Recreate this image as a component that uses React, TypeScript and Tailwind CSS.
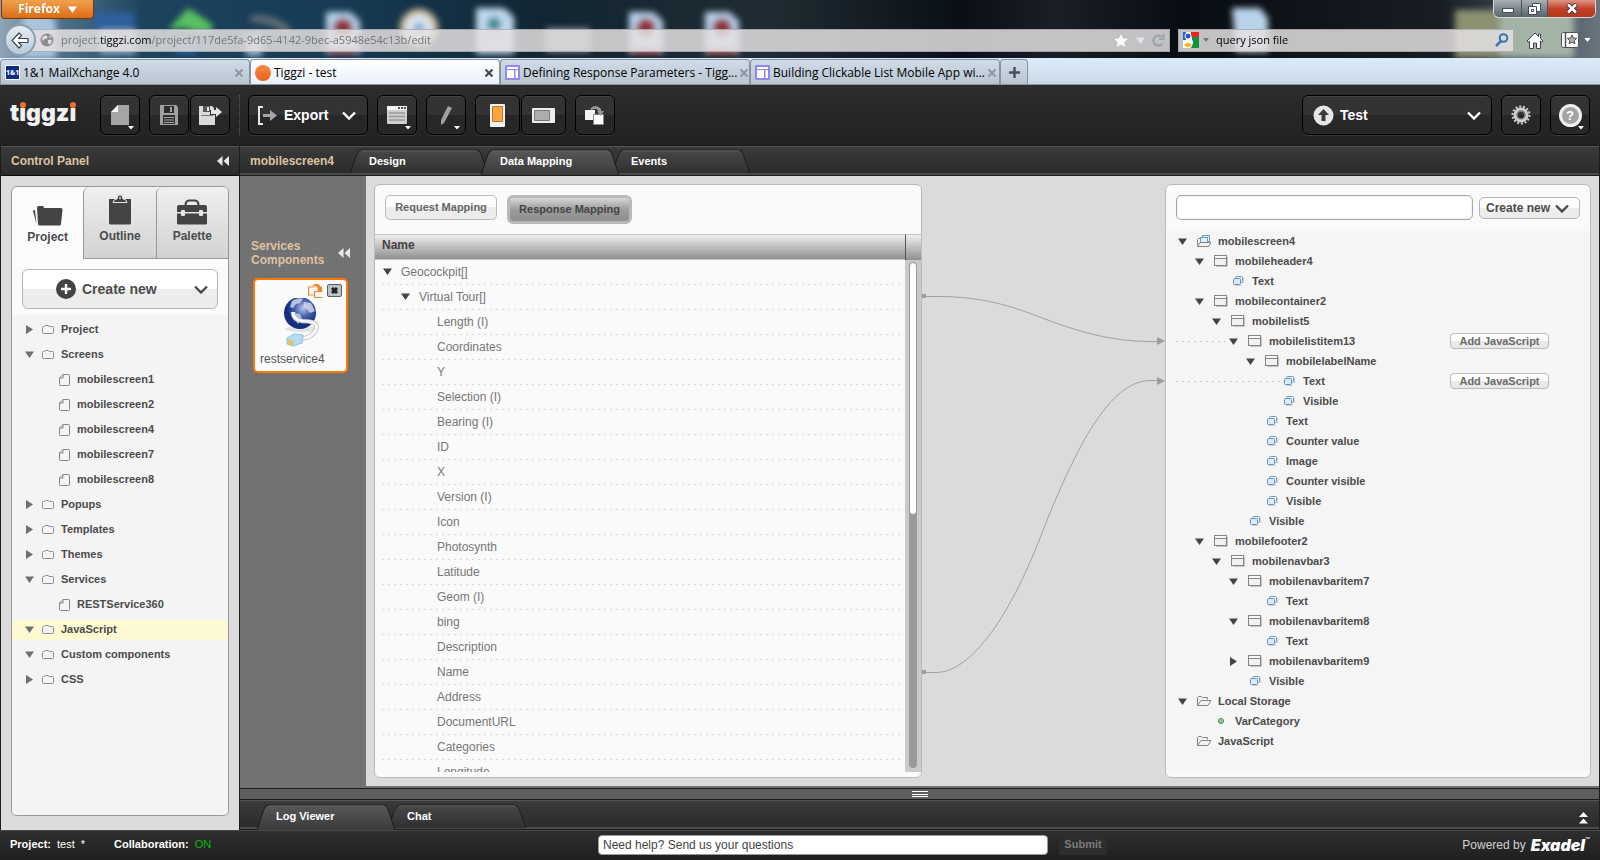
import React from 'react';
import clsx from 'clsx';

type IconKind = 'screen' | 'box' | 'prop' | 'folder' | 'var';

interface ProjectNode {
  label: string;
  state?: 'open' | 'closed';
  active?: boolean;
}

interface TargetNode {
  label: string;
  level: number;
  icon: IconKind;
  state?: 'open' | 'closed';
  mapped?: boolean;
}

const projectTree: ProjectNode[] = [
  { label: 'Project', state: 'closed' },
  { label: 'Screens', state: 'open' },
  { label: 'mobilescreen1' },
  { label: 'mobilescreen2' },
  { label: 'mobilescreen4' },
  { label: 'mobilescreen7' },
  { label: 'mobilescreen8' },
  { label: 'Popups', state: 'closed' },
  { label: 'Templates', state: 'closed' },
  { label: 'Themes', state: 'closed' },
  { label: 'Services', state: 'open' },
  { label: 'RESTService360' },
  { label: 'JavaScript', state: 'open', active: true },
  { label: 'Custom components', state: 'open' },
  { label: 'CSS', state: 'closed' },
];

const responseFields = [
  'Length (I)', 'Coordinates', 'Y', 'Selection (I)', 'Bearing (I)', 'ID', 'X', 'Version (I)', 'Icon',
  'Photosynth', 'Latitude', 'Geom (I)', 'bing', 'Description', 'Name', 'Address', 'DocumentURL',
  'Categories', 'Longitude',
];

const targetTree: TargetNode[] = [
  { label: 'mobilescreen4', level: 0, icon: 'screen', state: 'open' },
  { label: 'mobileheader4', level: 1, icon: 'box', state: 'open' },
  { label: 'Text', level: 2, icon: 'prop' },
  { label: 'mobilecontainer2', level: 1, icon: 'box', state: 'open' },
  { label: 'mobilelist5', level: 2, icon: 'box', state: 'open' },
  { label: 'mobilelistitem13', level: 3, icon: 'box', state: 'open', mapped: true },
  { label: 'mobilelabelName', level: 4, icon: 'box', state: 'open' },
  { label: 'Text', level: 5, icon: 'prop', mapped: true },
  { label: 'Visible', level: 5, icon: 'prop' },
  { label: 'Text', level: 4, icon: 'prop' },
  { label: 'Counter value', level: 4, icon: 'prop' },
  { label: 'Image', level: 4, icon: 'prop' },
  { label: 'Counter visible', level: 4, icon: 'prop' },
  { label: 'Visible', level: 4, icon: 'prop' },
  { label: 'Visible', level: 3, icon: 'prop' },
  { label: 'mobilefooter2', level: 1, icon: 'box', state: 'open' },
  { label: 'mobilenavbar3', level: 2, icon: 'box', state: 'open' },
  { label: 'mobilenavbaritem7', level: 3, icon: 'box', state: 'open' },
  { label: 'Text', level: 4, icon: 'prop' },
  { label: 'mobilenavbaritem8', level: 3, icon: 'box', state: 'open' },
  { label: 'Text', level: 4, icon: 'prop' },
  { label: 'mobilenavbaritem9', level: 3, icon: 'box', state: 'closed' },
  { label: 'Visible', level: 3, icon: 'prop' },
  { label: 'Local Storage', level: 0, icon: 'folder', state: 'open' },
  { label: 'VarCategory', level: 1, icon: 'var' },
  { label: 'JavaScript', level: 0, icon: 'folder' },
];

/* ---------- small icons ---------- */

const Chevron = ({ className }: { className?: string }) => (
  <svg width="14" height="9" viewBox="0 0 14 9" className={className} fill="none" stroke="currentColor" strokeWidth="2.4">
    <path d="M1 1.5 7 7.5 13 1.5" />
  </svg>
);

const Triangle = ({ state, className }: { state: 'open' | 'closed'; className?: string }) => (
  <svg width="9" height="9" viewBox="0 0 9 9" className={className} fill="currentColor">
    {state === 'open' ? <path d="M0 1.5h9L4.5 8z" /> : <path d="M1 0v9L8 4.5z" />}
  </svg>
);

const DoubleLeft = () => (
  <svg width="12" height="10" viewBox="0 0 12 10" fill="#e8e8e8">
    <path d="M5.5 0v10L0 5zM12 0v10L6.500 5z" />
  </svg>
);

const FolderIcon = () => (
  <svg width="12" height="11" viewBox="0 0 12 11" fill="#f4f4f4" stroke="#8d8d8d">
    <path d="M.5 3.500q0-1 1-1h.5l1.500-1h2.500l1.500 1h3q1 0 1 1v5q0 1-1 1h-9q-1 0-1-1z" />
  </svg>
);

const PageIcon = () => (
  <svg width="11" height="12" viewBox="0 0 11 12" fill="#f4f4f4" stroke="#858585">
    <path d="M4 .5h5.500q1 0 1 1v9q0 1-1 1h-8q-1 0-1-1V4zM4 .5V4H.5" />
  </svg>
);

const NodeIcon = ({ kind }: { kind: IconKind }) => {
  if (kind === 'box') {
    return (
      <svg width="14" height="12" viewBox="0 0 14 12">
        <path d="M2 11.500h11.500V2" stroke="#c4c4c4" fill="none" />
        <rect x=".5" y=".5" width="12" height="10" fill="#f1f1f1" stroke="#858585" />
        <path d="M1 3.500h11" stroke="#858585" />
        <path d="M1 2h11" stroke="#fff" />
      </svg>
    );
  }
  if (kind === 'prop') {
    return (
      <svg width="12" height="10" viewBox="0 0 12 10">
        <path d="M3 9.500h7M11.500 2v5" stroke="#cfcfcf" />
        <rect x="3.500" y=".5" width="7" height="6" rx="1" fill="#eef5fa" stroke="#6d9ac6" />
        <rect x="1.500" y="2.500" width="7" height="6" rx="1" fill="#dcebf4" stroke="#6190bf" />
      </svg>
    );
  }
  if (kind === 'var') {
    return (
      <svg width="14" height="8" viewBox="0 0 14 8">
        <circle cx="7" cy="4" r="2.600" fill="#8bc78b" stroke="#5c9a62" />
      </svg>
    );
  }
  return (
    <svg width="15" height="12" viewBox="0 0 15 12" fill="#f2f2f2" stroke="#858585">
      {kind === 'folder' && <path d="M.5 10.500v-8l1-1h3l1 1h5v2" />}
      {kind === 'screen' && (
        <>
          <path d="M3.500 3.500h-2l-1 1v6" />
          <g fill="#e3f0f8" stroke="#6d9ac6">
            <rect x="5.500" y=".5" width="7" height="6" />
            <rect x="3.500" y="2.500" width="7" height="6" />
          </g>
        </>
      )}
      <path d={kind === 'screen' ? 'M.5 11.500 3 7.500h11l-2.500 4z' : 'M.5 10.500 4 5.500h10l-3 5z'} />
    </svg>
  );
};

/* ---------- browser chrome ---------- */

const Wallpaper = () => (
  <svg className="absolute inset-0 h-full w-full" viewBox="0 0 1600 58" preserveAspectRatio="none">
    <defs>
      <linearGradient id="sky">
        <stop offset="0" stopColor="#8fa4b4" />
        <stop offset=".04" stopColor="#4d7089" />
        <stop offset=".09" stopColor="#1c435e" />
        <stop offset=".22" stopColor="#163a52" />
        <stop offset=".34" stopColor="#112532" />
        <stop offset=".48" stopColor="#202c33" />
        <stop offset=".6" stopColor="#0a0f17" />
        <stop offset=".66" stopColor="#1a1f27" />
        <stop offset=".74" stopColor="#080d14" />
        <stop offset=".9" stopColor="#181d24" />
        <stop offset="1" stopColor="#69747f" />
      </linearGradient>
      <filter id="haze" x="-20%" y="-50%" width="140%" height="200%">
        <feGaussianBlur stdDeviation="3" />
      </filter>
    </defs>
    <rect width="1600" height="58" fill="url(#sky)" />
    <g filter="url(#haze)">
      <path d="M22 14h28l6 8v36H22z" fill="#a9c4dc" />
      <rect x="94" y="12" width="40" height="22" fill="#2f5f9c" />
      <path d="M100 30h36v24h-36z" fill="#8fb0cc" />
      <path d="M168 30 188 8l24 16v8h-18l-8-4z" fill="#5cc163" />
      <rect x="176" y="40" width="20" height="14" fill="#2c5fa3" />
      <path d="M250 16q26-4 42 14l-6 6q-14-14-36-14z" fill="#626d74" />
      <path d="M246 34h16v22h-16z" fill="#9dbad2" />
      <g id="pdf">
        <path d="M326 12h24l10 9v33h-34z" fill="#b9d3ea" />
        <circle cx="343" cy="28" r="10" fill="#93303a" />
        <rect x="328" y="48" width="30" height="6" fill="#b44d50" />
      </g>
      <use href="#pdf" x="303" />
      <use href="#pdf" x="379" />
      <circle cx="419" cy="28" r="17" fill="#d9e4ea" stroke="#bfae84" strokeWidth="5" />
      <circle cx="419" cy="28" r="5" fill="#6aa0cf" />
      <path d="M476 8h28l10 9v37h-38z" fill="#c0d8ec" />
      <circle cx="494" cy="24" r="7" fill="#3b8593" />
      <rect x="546" y="28" width="44" height="24" fill="#83898e" />
      <path d="M1232 8h28l8 10v34h-32z" fill="#b9d4ea" />
      <rect x="1455" y="10" width="46" height="48" fill="#8c9172" />
      <rect x="1500" y="10" width="74" height="48" fill="#a3b3a6" />
    </g>
  </svg>
);

const WikiIcon = () => (
  <svg width="15" height="15" viewBox="0 0 15 15" className="shrink-0">
    <rect width="15" height="15" rx="1" fill="#8f88ea" />
    <path d="M2 2h11v2H2zM2 5h7v8H2zM10.500 5H13v8h-2.500z" fill="#fff" />
  </svg>
);

const browserTabs = [
  {
    title: '1&1 MailXchange 4.0',
    icon: (
      <span className="flex h-[15px] w-[15px] items-center justify-center border border-white bg-[#0b2d86] font-['Open_Sans',sans-serif] text-[7px] font-bold text-white">
        1&amp;1
      </span>
    ),
  },
  { title: 'Tiggzi - test', active: true, icon: <span className="h-4 w-4 rounded-full bg-linear-to-b from-[#f58a45] to-[#ea5f1c]" /> },
  { title: 'Defining Response Parameters - Tigg...', icon: <WikiIcon /> },
  { title: 'Building Clickable List Mobile App wi...', icon: <WikiIcon /> },
];

const BrowserChrome = () => (
  <header className="shrink-0 font-['Open_Sans','Noto_Sans',sans-serif] text-xs text-black">
    <div className="relative h-[58px] overflow-hidden">
      <Wallpaper />
      <div className="relative flex items-start justify-between pr-1">
        <button className="ml-px flex h-[19px] w-[93px] items-center justify-center gap-2 rounded-b border border-t-0 border-[#6f3a12] bg-linear-to-b from-[#f0a04c] to-[#dd6d10] text-xs font-bold text-white">
          Firefox
          <Triangle state="open" />
        </button>
        <div className="flex h-[18px] overflow-hidden rounded-b-md border border-t-0 border-[#d5dade]">
          <button aria-label="Minimize" className="flex w-7 items-center justify-center border-r border-[#4d565c] bg-linear-to-b from-[#a9b0b4] to-[#59636a]">
            <span className="mt-1 h-[5px] w-3 border border-[#444e5c] bg-white" />
          </button>
          <button aria-label="Restore" className="flex w-[26px] items-center justify-center border-r border-[#4d565c] bg-linear-to-b from-[#a9b0b4] to-[#59636a]">
            <svg width="13" height="12" viewBox="0 0 13 12" fill="#fff" stroke="#444e5c">
              <path d="M4.500.5h8v8h-8z" />
              <path d="M.5 3.500h8v8h-8z" />
              <path d="M3.500 6.500h2v2h-2z" />
            </svg>
          </button>
          <button aria-label="Close" className="flex w-[47px] items-center justify-center bg-linear-to-b from-[#dc9486] via-[#c43f26] to-[#b2371d]">
            <svg width="12" height="11" viewBox="0 0 12 11">
              <path d="m1.500 1 9 9m0-9-9 9" stroke="#4a3440" strokeWidth="4.500" />
              <path d="m2 1.500 8 8m0-8-8 8" stroke="#fff" strokeWidth="2.500" />
            </svg>
          </button>
        </div>
      </div>
      <div className="absolute inset-x-0 top-[24px] flex h-8 items-center pl-1">
        <button aria-label="Back" className="z-10 flex h-8 w-8 shrink-0 items-center justify-center rounded-full border-2 border-[#8a9db0] bg-linear-to-b from-[#e5edf4] to-[#b9cad9]">
          <svg width="18" height="17" viewBox="0 0 18 17" fill="#fff" stroke="#3c4650" strokeWidth="1.200" strokeLinejoin="round">
            <path d="M8 1 1 8.500 8 16l2.500-2.500-3-3H17v-4H7.500l3-3z" />
          </svg>
        </button>
        <div className="-ml-2 flex h-[23px] flex-1 items-center gap-[7px] border border-[#8e9399]/60 bg-[#e4e0e2]/85 pr-1 pl-[11px]">
          <svg width="14" height="14" viewBox="0 0 14 14">
            <circle cx="7" cy="7" r="6.500" fill="#8d8d8d" />
            <path d="M2 5q3-4 5-2t-2 3-1 4q-2-2-2-5zM8 7q4-1 4 1t-3 4q0-2-1-2zM9 2l3 2-2 1z" fill="#dedede" />
          </svg>
          <span className="flex-1 text-[11px] text-[#757575]">
            project.<span className="text-black">tiggzi.com</span>/project/117de5fa-9d65-4142-9bec-a5948e54c13b/edit
          </span>
          <svg width="16" height="15" viewBox="0 0 16 15" fill="#fafafa" stroke="#b5b5b5" strokeWidth=".6">
            <path d="m8 0 2.300 5 5.500.6-4 3.700 1 5.400L8 12l-4.800 2.700 1-5.400-4-3.700L5.700 5z" />
          </svg>
          <Triangle state="open" className="text-[#dfe7ee]" />
          <svg width="13" height="13" viewBox="0 0 13 13" fill="none" stroke="#9ba5ae" strokeWidth="2.200">
            <path d="M10.500 9.500A5 5 0 1 1 9.500 2.800M11.500 0v5H7" />
          </svg>
        </div>
        <div className="ml-2 flex h-[23px] w-[336px] items-center gap-1 border border-[#8e9399]/60 bg-[#e4e0e2]/85 pr-1 pl-1">
          <svg width="16" height="16" viewBox="0 0 16 16">
            <path d="M0 0h16v16H0z" fill="#fff" />
            <path d="M8 0h8v5H8z" fill="#e22" />
            <path d="M9 5h7v11H8z" fill="#0d9440" />
            <path d="M0 0h3v8H0z" fill="#2a62d4" />
            <circle cx="5" cy="4" r="3" fill="#2457c8" stroke="#fff" />
            <ellipse cx="5" cy="13" rx="4" ry="2.500" fill="#f6b416" stroke="#fff" />
            <path d="M6 7q4 2 3 5" stroke="#fff" strokeWidth="2" fill="none" />
          </svg>
          <svg width="6" height="4" viewBox="0 0 6 4" fill="#777">
            <path d="M0 0h6L3 4z" />
          </svg>
          <input aria-label="Search" defaultValue="query json file" className="ml-[3px] min-w-0 flex-1 bg-transparent text-[11px] outline-none" />
          <svg width="14" height="14" viewBox="0 0 14 14" fill="none" stroke="#3873b3" strokeWidth="2">
            <circle cx="8.500" cy="5" r="3.800" />
            <path d="M6 8 1 13" strokeWidth="2.500" />
          </svg>
        </div>
        <button aria-label="Home" className="ml-3">
          <svg width="18" height="17" viewBox="0 0 18 17" fill="#fff" stroke="#3f464b">
            <path d="M9 1 1 9l1.200 1.200L3.500 9v7.500h4V11h3v5.500h4V9l1.300 1.200L17 9l-2.500-2.500V2h-2v2.500z" />
          </svg>
        </button>
        <button aria-label="Bookmarks" className="mr-2 ml-[17px] flex items-center gap-1">
          <svg width="18" height="16" viewBox="0 0 18 16">
            <rect x=".5" y=".5" width="17" height="15" rx="2" fill="#fff" stroke="#4b5358" />
            <path d="M4.500 1v14" stroke="#4b5358" strokeWidth="1.500" />
            <path d="m11 3 1.500 3 3.200.4-2.400 2.200.7 3.200-3-1.600-3 1.600.7-3.200-2.400-2.200L9.500 6z" fill="#a9b0a8" stroke="#4b5358" />
          </svg>
          <svg width="9" height="6" viewBox="0 0 9 6" fill="#fff" stroke="#4b5358" strokeWidth=".7">
            <path d="M.5.5h8l-4 5z" />
          </svg>
        </button>
      </div>
    </div>
    <nav className="flex h-[27px] items-end border-b border-[#8a96a0] bg-linear-to-b from-[#dcebfa] to-[#c9d9e7]">
      {browserTabs.map((tab) => (
        <div
          key={tab.title}
          className={clsx(
            'flex h-[25px] w-[250px] items-center gap-[3px] rounded-t border border-b-0 border-[#86929d] pt-px pr-[6px] pl-1',
            tab.active ? 'bg-linear-to-b from-white to-[#e9f1fa]' : 'bg-linear-to-b from-[#cfdce9] to-[#b9c6d0]',
          )}
        >
          {tab.icon}
          <span className="flex-1 whitespace-nowrap">{tab.title}</span>
          <button aria-label="Close tab" className={tab.active ? 'text-[#444]' : 'text-[#8b98a3]'}>
            <svg width="8" height="8" viewBox="0 0 8 8" stroke="currentColor" strokeWidth="2">
              <path d="m.5.5 7 7m0-7-7 7" />
            </svg>
          </button>
        </div>
      ))}
      <button aria-label="New tab" className="flex h-[25px] w-7 items-center justify-center rounded-t border border-b-0 border-[#86929d] bg-linear-to-b from-[#cfdce9] to-[#b9c6d0]">
        <svg width="11" height="11" viewBox="0 0 11 11" stroke="#414e5b" strokeWidth="2.400">
          <path d="M5.500 0v11M0 5.500h11" />
        </svg>
      </button>
    </nav>
  </header>
);

/* ---------- app toolbar ---------- */

interface ToolButtonProps {
  label: string;
  className?: string;
  menu?: boolean;
  children: React.ReactNode;
}

const ToolButton: React.FC<ToolButtonProps> = ({ label, className, menu, children }) => (
  <button
    aria-label={label}
    className={clsx(
      'relative flex h-10 shrink-0 items-center rounded-md border border-black bg-linear-to-b from-[#333] from-50% to-[#272727] to-50% text-sm font-bold text-white shadow-[0_1px_0_#3a3a3a,inset_0_1px_0_#444]',
      className ?? 'w-10 justify-center',
    )}
  >
    {children}
    {menu && (
      <svg width="6" height="4" viewBox="0 0 6 4" className="absolute right-[5px] bottom-1" fill="#fff">
        <path d="M0 0h6L3 3.500z" />
      </svg>
    )}
  </button>
);

const TiggziLogo = () => (
  <span className="flex w-[90px] font-['Inter',sans-serif] text-[23px] leading-7 font-black text-[#f1f1f1]">
    {'tiggzi'.split('').map((ch, i) => (
      <span key={i} className="relative -top-[2px]">
        {ch}
        {ch === 'i' && <span className="absolute top-[3px] left-px h-[6px] w-[6px] rounded-full bg-[#f0702a]" />}
      </span>
    ))}
  </span>
);

const Toolbar = () => (
  <div className="flex h-[61px] shrink-0 items-center border-b border-[#1a1a1a] bg-linear-to-b from-[#2d2d2d] to-[#212121] px-[10px]">
    <TiggziLogo />
    <ToolButton label="New" menu>
      <svg width="18" height="20" viewBox="0 0 18 20">
        <path d="M7 0h11v20H0V7z" fill="#a5a5a5" />
        <path d="M7 0v7H0z" fill="#f6f6f6" />
      </svg>
    </ToolButton>
    <div className="mx-[9px] flex gap-px">
      <ToolButton label="Save">
        <svg width="18" height="20" viewBox="0 0 18 20">
          <path d="M0 0h16l2 2v18H0z" fill="#a0a0a0" />
          <path d="M4 1h10v7H4z" fill="#2c2c2c" />
          <path d="M10 2h2v5h-2z" fill="#a0a0a0" />
          <path d="M3 10h12v9H3z" fill="#303030" />
          <path d="M4 12.500h10M4 15h10M4 17.500h10" stroke="#a0a0a0" />
        </svg>
      </ToolButton>
      <ToolButton label="Save as">
        <svg width="23" height="19" viewBox="0 0 23 19">
          <path d="M0 0h13l2 2v2h-4v5h5v10H0z" fill="#dadada" />
          <path d="M4 0h7v6H4z" fill="#555" />
          <path d="M8 1h2v4H8z" fill="#e8e8e8" />
          <path d="M2 9h12v1H2z" fill="#777" />
          <path d="M12 4h5V1l6 5-6 5V8h-5z" fill="#e6e6e6" />
        </svg>
      </ToolButton>
    </div>
    <span className="mr-2 h-10 border-l border-dotted border-[#5c5c5c]" />
    <ToolButton label="Export" className="w-[120px] gap-[6px] pl-2">
      <svg width="21" height="19" viewBox="0 0 21 19">
        <path d="M6 1H2v17h4" fill="none" stroke="#e8e8e8" strokeWidth="2" />
        <path d="M6 8h7V4l7 5.500-7 5.500v-4H6z" fill="#a5a5a5" />
      </svg>
      Export
      <Chevron className="ml-2" />
    </ToolButton>
    <div className="mx-[9px] flex gap-[9px]">
      <ToolButton label="View" menu>
        <svg width="20" height="18" viewBox="0 0 20 18">
          <rect width="20" height="18" rx="1" fill="#cfcfcf" />
          <path d="M0 0h20v4H0z" fill="#f2f2f2" />
          <path d="M11 2h2m1 0h2m1 0h2" stroke="#555" strokeWidth="2" />
          <path d="M2 7h16M2 10.500h16M2 14h16" stroke="#999" strokeWidth="1.500" />
        </svg>
      </ToolButton>
      <ToolButton label="Edit" menu>
        <svg width="12" height="19" viewBox="0 0 12 19">
          <path d="m8 0 4 2L4 17l-3 2V14z" fill="#a0a0a0" />
        </svg>
      </ToolButton>
    </div>
    <div className="flex gap-px">
      <ToolButton label="Portrait" className="w-[45px] justify-center">
        <svg width="15" height="23" viewBox="0 0 15 23">
          <rect width="15" height="23" rx="1" fill="#f1f1f1" />
          <path d="M2.500 2.500h10v15h-10z" fill="#ffa340" stroke="#c47725" />
        </svg>
      </ToolButton>
      <ToolButton label="Landscape" className="w-[45px] justify-center">
        <svg width="23" height="15" viewBox="0 0 23 15">
          <rect width="23" height="15" rx="1" fill="#ececec" />
          <path d="M2.500 2.500h15v10h-15z" fill="#aeaeae" stroke="#777" />
        </svg>
      </ToolButton>
    </div>
    <div className="ml-[9px] flex-1">
      <ToolButton label="Rotate">
        <svg width="20" height="20" viewBox="0 0 20 20">
          <path d="M0 5h10v10H0z" fill="#f4f4f4" />
          <path d="M8.500 9.500h10v10h-10z" fill="#fff" stroke="#888" />
          <path d="M5 4q5-6 11 0v2h3l-3.500 5L12 6h2q-4-4-7-1z" fill="#9a9a9a" />
        </svg>
      </ToolButton>
    </div>
    <ToolButton label="Test" className="w-[190px] pr-[10px] pl-[10px]">
      <svg width="21" height="21" viewBox="0 0 21 21">
        <circle cx="10.500" cy="10.500" r="10" fill="#e6e6e6" />
        <path d="M10.500 4 16 10h-3.500v6h-4v-6H5z" fill="#3b3b3b" />
      </svg>
      <span className="ml-[6px] flex-1 text-left">Test</span>
      <Chevron />
    </ToolButton>
    <div className="ml-[9px] flex gap-[9px]">
      <ToolButton label="Settings">
        <svg width="20" height="20" viewBox="0 0 20 20" fill="none">
          <circle cx="10" cy="10" r="8.500" stroke="#d0d0d0" strokeWidth="2" strokeDasharray="2 1.800" />
          <circle cx="10" cy="10" r="5.500" stroke="#cfcfcf" strokeWidth="4" />
          <circle cx="10" cy="10" r="4" stroke="#777" strokeWidth="1.500" />
        </svg>
      </ToolButton>
      <ToolButton label="Help" menu>
        <span className="flex h-[23px] w-[23px] items-center justify-center rounded-full border-[3px] border-[#f0f0f0] bg-[#a4a4a4] text-[13px] leading-none">
          ?
        </span>
      </ToolButton>
    </div>
  </div>
);

/* ---------- left column ---------- */

const ProjectRow: React.FC<{ node: ProjectNode }> = ({ node }) => (
  <li className="flex h-[25px] items-center">
    <span className={clsx('flex h-5 flex-1 items-center', node.active && 'bg-[#fdfad3]')}>
      {node.state ? (
        <>
          <button aria-label={'Toggle ' + node.label} className="mr-2 ml-[13px] text-[#6a716e]">
            <Triangle state={node.state} />
          </button>
          <FolderIcon />
          <span className="ml-[7px]">{node.label}</span>
        </>
      ) : (
        <>
          <span className="mr-[7px] ml-[47px]">
            <PageIcon />
          </span>
          {node.label}
        </>
      )}
    </span>
  </li>
);

const panelTabs = [
  {
    title: 'Project',
    icon: (
      <svg width="30" height="20" viewBox="0 0 30 20" fill="#444">
        <path d="M4 1.500Q4 0 5.500 0h4Q11 0 11 2h17q1.500 0 1.500 1.500L28 18q0 1.500-1.500 1.500h-20Q5 19.500 5 18z" />
        <path d="M0 5q0-1 2-1l1.500 14z" />
      </svg>
    ),
  },
  {
    title: 'Outline',
    icon: (
      <svg width="24" height="30" viewBox="0 0 24 30">
        <path d="M1 4h22v24q0 1.500-1.500 1.500h-19Q1 29.500 1 28z" fill="#444" />
        <path d="M5 7.500q0-3 4-3.500 0-4 3-4t3 4q4 .5 4 3.500z" fill="#444" stroke="#e6e6e6" />
        <circle cx="12" cy="3" r="1" fill="#e6e6e6" />
      </svg>
    ),
  },
  {
    title: 'Palette',
    icon: (
      <svg width="30" height="26" viewBox="0 0 30 26">
        <path d="M8.500 7q0-5 3-5.500h7q3 .5 3 5.500" fill="none" stroke="#444" strokeWidth="2.200" />
        <path d="M2 6h26q2 0 2 2v5H0V8q0-2 2-2zM0 14.500h30V24q0 1.500-1.500 1.500h-27Q0 25.500 0 24z" fill="#444" />
        <rect x="4" y="11" width="4" height="6" rx="1" fill="#e6e6e6" />
        <rect x="22" y="11" width="4" height="6" rx="1" fill="#e6e6e6" />
      </svg>
    ),
  },
];

const ControlPanel = () => (
  <aside className="flex w-[239px] shrink-0 flex-col border-l border-[#1c1c1c] bg-[#dbdbdb]">
    <div className="flex h-[30px] shrink-0 items-center justify-between border-t border-b border-t-[#555] border-b-[#0d0d0d] bg-linear-to-b from-[#393939] to-[#2b2b2b] pr-[10px] pl-[10px] text-xs font-bold text-[#dfc3a0]">
      <h2>Control Panel</h2>
      <button aria-label="Collapse control panel">
        <DoubleLeft />
      </button>
    </div>
    <div className="mx-[10px] mt-[10px] mb-[14px] flex min-h-0 flex-1 flex-col overflow-hidden rounded-md border border-[#999] bg-[#fbfbfb] text-[#4b4b4b]">
      <div className="flex">
        {panelTabs.map((tab, i) => (
          <button
            key={tab.title}
            className={clsx(
              'flex h-[72px] flex-1 flex-col items-center justify-end gap-[3px] pb-[14px] text-xs leading-4 font-bold',
              i > 0 && 'rounded-tl-md border-b border-l border-[#999] bg-linear-to-b from-[#f0f0f0] to-[#d2d2d2]',
            )}
          >
            {tab.icon}
            {tab.title}
          </button>
        ))}
      </div>
      <button className="mx-[10px] mt-[10px] mb-[6px] flex h-10 shrink-0 items-center rounded-md border border-[#b5b5b5] bg-linear-to-b from-white from-50% to-[#ededed] to-50% pr-[9px] pl-[33px] text-sm font-bold">
        <svg width="20" height="20" viewBox="0 0 20 20">
          <circle cx="10" cy="10" r="10" fill="#444" />
          <path d="M10 5v10M5 10h10" stroke="#fff" strokeWidth="2.400" />
        </svg>
        <span className="ml-[6px] flex-1 text-left">Create new</span>
        <Chevron />
      </button>
      <ul className="flex-1 bg-[#f4f4f4] pt-[2px] text-[11px] font-bold">
        {projectTree.map((node) => (
          <ProjectRow key={node.label} node={node} />
        ))}
      </ul>
    </div>
  </aside>
);

/* ---------- slanted tabs used above and below the canvas ---------- */

const SlantTab: React.FC<{ title: string; active?: boolean }> = ({ title, active }) => (
  <button
    className={clsx(
      'relative -ml-[7px] w-[138px] pl-[19px] text-left text-[11px] font-bold text-white',
      active ? 'z-10 h-[26px] pb-[2px]' : 'h-6',
    )}
  >
    <svg className="absolute inset-0 h-full w-full" viewBox="0 0 138 25" preserveAspectRatio="none">
      <defs>
        <linearGradient id={active ? 'tab-on' : 'tab-off'} x2="0" y2="1">
          <stop offset="0" stopColor={active ? '#585858' : '#484848'} />
          <stop offset="1" stopColor={active ? '#3a3a3a' : '#303030'} />
        </linearGradient>
      </defs>
      <path
        d="M0 25 7 5q2-4 5-4h114q4 0 5 4l7 20"
        fill={active ? 'url(#tab-on)' : 'url(#tab-off)'}
        stroke="#1c1c1c"
      />
      <path d="M11 2h116" stroke="#636363" />
    </svg>
    <span className="relative">{title}</span>
  </button>
);

/* ---------- mapping canvas ---------- */

const ServicesColumn = () => (
  <section className="w-[126px] shrink-0 bg-[#747474] bg-[repeating-linear-gradient(0deg,#707070_0_1px,transparent_1px_4px),repeating-linear-gradient(90deg,#707070_0_1px,transparent_1px_4px)] pt-[63px] pl-[11px] text-xs">
    <div className="flex items-center justify-between pr-4">
      <h3 className="w-20 leading-[14px] font-bold text-[#dfc3a0]">Services Components</h3>
      <button aria-label="Collapse services">
        <DoubleLeft />
      </button>
    </div>
    <div className="mt-[11px] ml-[2px] h-[95px] w-[95px] rounded-[5px] border-2 border-[#ff7900] bg-[#fafafa] px-[4px] pt-[2px] text-[#555]">
      <div className="flex h-4 items-center justify-end gap-1">
        <svg width="15" height="15" viewBox="0 0 15 15" fill="none" stroke="#ee8a35" strokeWidth="1.200">
          <path d="M6.500 4H.6v8h5M14.500 8.500H6.600v6h8" />
          <path d="M4 3q5-5 9 1l1-1v6L8 7l2-1Q8 2 4 3z" fill="#ee8a35" stroke="none" />
        </svg>
        <button aria-label="Remove service" className="flex h-[13px] w-[15px] items-center justify-center rounded-[2px] border border-[#555f5f] bg-[#b9c4c4]">
          <svg width="7" height="7" viewBox="0 0 7 7" stroke="#222" strokeWidth="3">
            <path d="m1 1 5 5m0-5-5 5" />
          </svg>
        </button>
      </div>
      <svg width="38" height="50" viewBox="0 0 38 50" className="ml-[23px]">
        <defs>
          <radialGradient id="globe" cx=".6" cy=".35">
            <stop offset="0" stopColor="#b9c6e6" />
            <stop offset=".5" stopColor="#4a66b0" />
            <stop offset="1" stopColor="#142f80" />
          </radialGradient>
        </defs>
        <ellipse cx="20" cy="31" rx="17" ry="3" fill="#e2e2e2" />
        <circle cx="18" cy="15" r="16" fill="url(#globe)" />
        <path d="M10 3q6-4 11-2l-3 4-4 1-3 4-3-1zM22 4l7 1 4 8-5 2-3-4-4-2zM12 15l6 1 2 5-4 5-3-4z" fill="#d3dbee" opacity=".8" />
        <path d="M11 14q0 8 9 9 7 0 11 1.500 6 3 2 9-4 6-12 7" fill="none" stroke="#b3b3b3" strokeWidth="4.600" />
        <path d="M11 14q0 8 9 9 7 0 11 1.500 6 3 2 9-4 6-12 7" fill="none" stroke="#f6f6f6" strokeWidth="3.200" />
        <path d="m5 40 7-4 9 1-1 8-9 3-6-2z" fill="#b4dcf6" stroke="#74b0e0" strokeWidth=".7" />
        <path d="m6 41 6 2-1 5-5-2z" fill="#dfc463" />
      </svg>
      <p className="pt-px pl-px leading-5">restservice4</p>
    </div>
  </section>
);

interface MappingRowProps {
  label: string;
  indent: string;
  open?: boolean;
}

const MappingRow: React.FC<MappingRowProps> = ({ label, indent, open }) => (
  <tr>
    <td className="h-[25px] p-0 pr-1 pl-[7px]">
      <div
        className={clsx(
          'flex h-[25px] items-center gap-[9px] bg-[repeating-linear-gradient(90deg,#d9d9d9_0_2px,transparent_2px_6px)] bg-[length:100%_1px] bg-bottom bg-no-repeat pb-[2px]',
          indent,
        )}
      >
        {open && (
          <button aria-label={'Toggle ' + label} className="text-[#444]">
            <Triangle state="open" />
          </button>
        )}
        {label}
      </div>
    </td>
  </tr>
);

const MappingTable = () => (
  <section className="flex w-[548px] shrink-0 flex-col overflow-hidden rounded-md border border-[#bbb] bg-[#fafafa] pb-[5px]">
    <div className="flex shrink-0 items-start gap-[10px] pt-[10px] pb-[10px] pl-[10px] text-[11px] font-bold">
      <button className="h-[25px] w-28 rounded-[5px] border border-[#bbb] bg-linear-to-b from-[#fcfcfc] from-50% to-[#ececec] to-50% text-[#666]">
        Request Mapping
      </button>
      <button className="h-[29px] w-[125px] rounded-md border-[3px] border-[#b9b9b9] bg-linear-to-b from-[#d8d8d8] via-[#9d9d9d] via-50% to-[#8e8e8e] text-[#444]">
        Response Mapping
      </button>
    </div>
    <div className="flex min-h-0 flex-1">
      <div className="min-w-0 flex-1 overflow-hidden">
        <table className="w-full border-separate border-spacing-0 text-left text-xs text-[#777]">
          <thead>
            <tr>
              <th className="h-[26px] border-t border-b border-[#c4c4c4] bg-linear-to-b from-[#f0f0f0] to-[#909090] pb-1 pl-[7px] font-bold text-[#444]">
                Name
              </th>
            </tr>
          </thead>
          <tbody>
            <MappingRow label="Geocockpit[]" indent="pl-[1px]" open />
            <MappingRow label="Virtual Tour[]" indent="pl-[19px]" open />
            {responseFields.map((field) => (
              <MappingRow key={field} label={field} indent="pl-[55px]" />
            ))}
          </tbody>
        </table>
      </div>
      <div className="flex w-4 shrink-0 flex-col bg-[#cacaca]">
        <div className="h-[26px] border-t border-l border-t-[#c4c4c4] border-l-[#555] bg-linear-to-b from-[#f0f0f0] to-[#909090]" />
        <div className="mx-1 mt-[2px] mb-1 flex-1 overflow-hidden rounded-full bg-[#999]">
          <div className="h-1/2 rounded-full border border-[#999] bg-white" />
        </div>
      </div>
    </div>
  </section>
);

const Connectors = () => (
  <div className="min-w-0 flex-1">
    <svg className="h-[594px] w-full" viewBox="0 0 244 594" preserveAspectRatio="none" fill="none" stroke="#a0a0a0">
      <path d="M0 112.500h16C60 112.500 90 122 122 134.500C155 147 190 157.500 228 157.500h8" />
      <path d="M0 488.500h14C50 488.500 90 430 122 345C160 250 192 196.500 230 196.500h6" />
      <g fill="#9c9c9c" stroke="none">
        <path d="M0 110h4v4H0zM0 486h4v4H0zM236 153v8l8-4zM236 193v8l8-4z" />
      </g>
    </svg>
  </div>
);

const TargetRow: React.FC<{ node: TargetNode }> = ({ node }) => (
  <li className="flex h-5 items-center">
    <span
      className={clsx('h-px self-center', node.mapped && 'bg-[repeating-linear-gradient(90deg,#c9c9c9_0_2px,transparent_2px_6px)]')}
      style={{ width: node.level * 17 + (node.state ? 2 : 19) }}
    />
    {node.state && (
      <button aria-label={'Toggle ' + node.label} className="mr-2 text-[#444]">
        <Triangle state={node.state} />
      </button>
    )}
    <span className="flex w-[18px] shrink-0 justify-center">
      <NodeIcon kind={node.icon} />
    </span>
    <span className="ml-[5px] flex-1">{node.label}</span>
    {node.mapped && (
      <button className="mr-[31px] h-4 w-[99px] rounded-[4px] border border-[#bbb] bg-linear-to-b from-[#fcfcfc] from-50% to-[#e9e9e9] to-50% leading-none text-[#6b6b6b]">
        Add JavaScript
      </button>
    )}
  </li>
);

const TargetPanel = () => (
  <section className="mr-2 flex w-[426px] shrink-0 flex-col overflow-hidden rounded-md border border-[#bbb] bg-[#fafafa] pb-[6px] text-[#4b4b4b]">
    <div className="flex h-[46px] shrink-0 items-start gap-[6px] pt-[10px] pr-[10px] pl-[10px]">
      <input aria-label="Filter components" className="h-[25px] min-w-0 flex-1 rounded-[5px] border border-[#a8a8a8] bg-white px-2 text-xs shadow-[inset_0_0_2px_#ccc]" />
      <button className="mt-[2px] flex h-[22px] w-[101px] items-center justify-between rounded-[5px] border border-[#b5b5b5] bg-linear-to-b from-[#fdfdfd] from-50% to-[#ececec] to-50% pr-[10px] pl-[6px] text-xs font-bold">
        Create new
        <Chevron />
      </button>
    </div>
    <ul className="min-h-0 flex-1 bg-[#f5f5f5] pr-[10px] pl-[10px] text-[11px] font-bold">
      {targetTree.map((node, i) => (
        <TargetRow key={i} node={node} />
      ))}
    </ul>
  </section>
);

const Workspace = () => (
  <main className="flex min-w-0 flex-1 flex-col border-r border-l border-[#1c1c1c] bg-[#2b2b2b]">
    <div className="flex h-[30px] shrink-0 items-start border-t border-b border-t-[#555] border-b-[#1c1c1c] bg-linear-to-b from-[#3a3a3a] to-[#2a2a2a] pt-[2px] shadow-[inset_0_-2px_0_#4a4a4a]">
      <h2 className="w-[117px] pl-[10px] text-xs leading-6 font-bold text-[#dfc3a0]">mobilescreen4</h2>
      <SlantTab title="Design" />
      <SlantTab title="Data Mapping" active />
      <SlantTab title="Events" />
    </div>
    <div className="flex min-h-0 flex-1 bg-[#dbdbdb]">
      <ServicesColumn />
      <div className="flex min-w-0 flex-1 border-b-2 border-[#737373] pt-2 pb-2 pl-2">
        <MappingTable />
        <Connectors />
        <TargetPanel />
      </div>
    </div>
    <div className="flex h-[12px] shrink-0 items-center justify-center border-y border-[#1c1c1c] bg-[#5e5e5e]">
      <span className="flex h-[6px] w-4 flex-col justify-between">
        <span className="h-px bg-white" />
        <span className="h-px bg-white" />
        <span className="h-px bg-white" />
      </span>
    </div>
    <div className="flex h-[30px] shrink-0 items-start border-t border-b border-t-[#555] border-b-[#1c1c1c] bg-linear-to-b from-[#3a3a3a] to-[#2a2a2a] pt-[3px] pl-6 shadow-[inset_0_-2px_0_#4a4a4a]">
      <SlantTab title="Log Viewer" active />
      <SlantTab title="Chat" />
      <button aria-label="Expand log" className="mt-2 mr-[11px] ml-auto">
        <svg width="9" height="12" viewBox="0 0 9 12" fill="#fff">
          <path d="M0 5h9L4.500 0zM0 11.500h9l-4.500-5z" />
        </svg>
      </button>
    </div>
  </main>
);

const StatusBar = () => (
  <footer className="flex h-[30px] shrink-0 items-center border-t border-[#484848] bg-linear-to-b from-[#2f2f2f] to-[#1f1f1f] pb-[2px] pl-[10px] text-[11px] text-white">
    <div className="flex flex-1">
      <b>Project:</b>
      <span className="ml-[6px]">test&nbsp; *</span>
      <b className="ml-[29px]">Collaboration:</b>
      <span className="ml-[6px] text-[#0db80d]">ON</span>
    </div>
    <input
      aria-label="Question"
      defaultValue="Need help? Send us your questions"
      className="h-5 w-[450px] rounded-[4px] border border-[#999] bg-white px-1 text-xs text-[#444]"
    />
    <div className="flex w-[552px] items-center pr-[10px] pl-[11px]">
      <button className="h-5 w-12 rounded-[3px] bg-[#2d2d2d] font-bold text-[#7c7c7c]">Submit</button>
      <span className="ml-auto text-xs text-[#d2d2d2]">Powered by</span>
      <a href="#exadel" className="ml-[5px] flex items-start font-['Inter',sans-serif] text-base leading-5 font-black text-white italic">
        Exadel
        <span className="text-[8px] leading-[10px] font-normal not-italic">™</span>
      </a>
    </div>
  </footer>
);

export default function App() {
  return (
    <div className="flex h-screen flex-col overflow-hidden bg-[#222] font-['Liberation_Sans',Arial,sans-serif]">
      <BrowserChrome />
      <Toolbar />
      <div className="flex min-h-0 flex-1">
        <ControlPanel />
        <Workspace />
      </div>
      <StatusBar />
    </div>
  );
}
